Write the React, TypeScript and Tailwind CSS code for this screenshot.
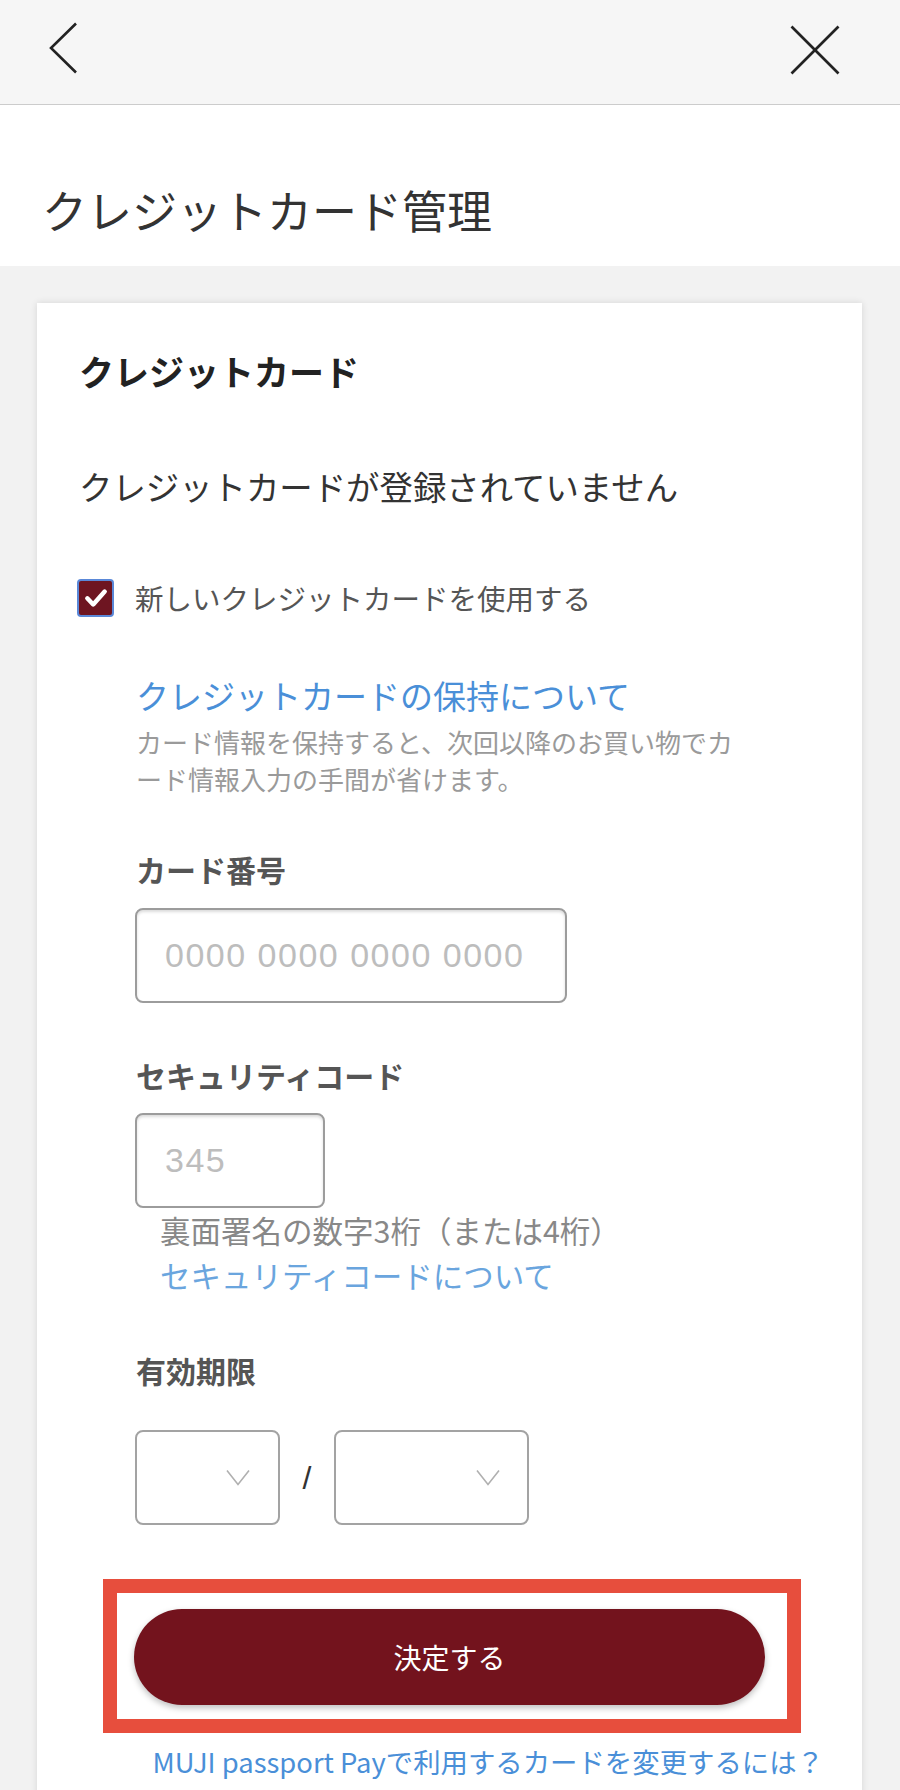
import React from "react";

const JP = { fontFamily: '"Noto Sans CJK JP", "Noto Sans", sans-serif' };

function Chevron() {
  return (
    <svg width="24" height="17" viewBox="0 0 24 17" fill="none">
      <polyline points="1,1.5 12,15.5 23,1.5" stroke="#b0b0b0" strokeWidth="1.6" />
    </svg>
  );
}

export default function App() {
  return (
    <div className="w-[900px] min-h-[1790px] bg-[#f2f2f2]" style={JP}>
      {/* header */}
      <div className="h-[105px] bg-[#f6f6f6] border-b border-[#cccccc] flex items-start justify-between pl-[49px] pr-[60px] pt-[22px]">
        <svg width="29" height="52" viewBox="0 0 29 52" fill="none">
          <polyline points="27,1.5 2,26 27,50.5" stroke="#222222" strokeWidth="2.6" />
        </svg>
        <svg width="50" height="50" viewBox="0 0 50 50" fill="none" className="mt-[2.5px]">
          <line x1="1.5" y1="1.5" x2="48.5" y2="48.5" stroke="#222222" strokeWidth="2.6" />
          <line x1="48.5" y1="1.5" x2="1.5" y2="48.5" stroke="#222222" strokeWidth="2.6" />
        </svg>
      </div>

      {/* page title */}
      <div className="bg-white pl-[42px] pt-[82px] pb-[34px]">
        <h1 className="text-[45px] leading-[45px] text-[#333333] font-normal">クレジットカード管理</h1>
      </div>

      {/* content */}
      <div className="pt-[37px] pl-[37px] pr-[38px]">
        <div className="bg-white shadow-[0_0_7px_rgba(0,0,0,0.12)] pt-[50px] pl-[42px] pr-[42px] pb-[40px] flex flex-col">
          <h2 className="text-[35px] leading-[35px] font-bold text-[#222222]">クレジットカード</h2>
          <p className="mt-[81px] text-[33.4px] leading-[33px] text-[#333333]">クレジットカードが登録されていません</p>

          <div className="mt-[77px] h-[38px] flex items-center -ml-[2px]">
            <div className="w-[37px] h-[38px] rounded-[4px] bg-[#6e1521] border-2 border-[#5a88d8] flex items-center justify-center">
              <svg width="28" height="28" viewBox="0 0 20 20" fill="none">
                <path d="M3.8 10.2 L8 14.6 L16.2 5.4" stroke="#ffffff" strokeWidth="3.2" strokeLinecap="round" strokeLinejoin="round" />
              </svg>
            </div>
            <span className="ml-[21px] text-[28.5px] leading-[38px] text-[#555555]">新しいクレジットカードを使用する</span>
          </div>

          <div className="pl-[57px] flex flex-col">
            <a className="mt-[62px] text-[33px] leading-[33px] text-[#4a8fd8]">クレジットカードの保持について</a>
            <p className="mt-[11px] w-[615px] text-[26px] leading-[37px] text-[#9a9a9a]">
              カード情報を保持すると、次回以降のお買い物でカード情報入力の手間が省けます。
            </p>

            <div className="mt-[57px] text-[30px] leading-[30px] font-bold text-[#555555]">カード番号</div>
            <div className="mt-[24px] -ml-[1px] w-[432px] h-[95px] rounded-[8px] border-2 border-[#9c9c9c] shadow-[inset_0_2px_3px_rgba(0,0,0,0.14)] flex items-center pl-[28px]">
              <span className="text-[34px] tracking-[1.5px] text-[#bdbdbd]" style={{ fontFamily: '"Liberation Sans", Arial, sans-serif' }}>
                0000 0000 0000 0000
              </span>
            </div>

            <div className="mt-[57px] text-[30px] leading-[30px] font-bold text-[#555555]">セキュリティコード</div>
            <div className="mt-[23px] -ml-[1px] w-[190px] h-[95px] rounded-[8px] border-2 border-[#9c9c9c] shadow-[inset_0_2px_3px_rgba(0,0,0,0.14)] flex items-center pl-[28px]">
              <span className="text-[34px] tracking-[1.5px] text-[#bdbdbd]" style={{ fontFamily: '"Liberation Sans", Arial, sans-serif' }}>
                345
              </span>
            </div>
            <p className="pl-[24px] text-[30.5px] leading-[45px] text-[#888888]">裏面署名の数字3桁（または4桁）</p>
            <a className="pl-[24px] text-[30.5px] leading-[45px] text-[#6aa5de]">セキュリティコードについて</a>

            <div className="mt-[57px] text-[30px] leading-[30px] font-bold text-[#555555]">有効期限</div>
            <div className="mt-[45px] -ml-[1px] flex items-center">
              <div className="w-[145px] h-[95px] rounded-[8px] border-2 border-[#a3a3a3] flex items-center justify-end pr-[28px]">
                <Chevron />
              </div>
              <span className="w-[54px] text-center text-[32px] leading-[32px] text-[#333333]" style={{ fontFamily: '"Liberation Sans", Arial, sans-serif' }}>/</span>
              <div className="w-[195px] h-[95px] rounded-[8px] border-2 border-[#a3a3a3] flex items-center justify-end pr-[27px]">
                <Chevron />
              </div>
            </div>
          </div>

          <div className="mt-[54px] ml-[24px] w-[698px] border-[14px] border-[#e74e3d] pl-[17px] pt-[16px] pb-[14px]">
            <button className="w-[631px] h-[96px] rounded-full bg-[#73131d] shadow-[0_3px_6px_rgba(0,0,0,0.25)] text-white text-[28px] leading-[28px]" style={JP}>
              決定する
            </button>
          </div>

          <a className="mt-[14px] -mr-[4px] text-right text-[27.4px] leading-[28px] text-[#4a8fd8]">MUJI passport Payで利用するカードを変更するには？</a>
        </div>
      </div>
    </div>
  );
}
